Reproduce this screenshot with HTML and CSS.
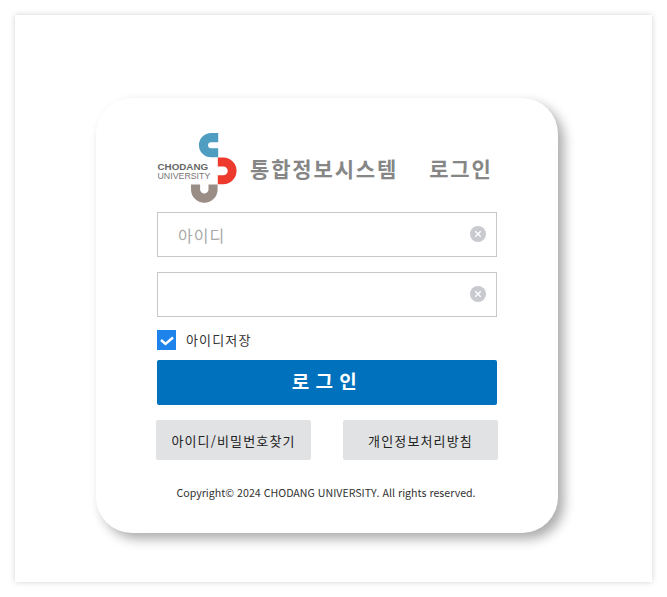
FILE: index.html
```html
<!DOCTYPE html>
<html lang="ko">
<head>
<meta charset="utf-8">
<title>통합정보시스템 로그인</title>
<link rel="stylesheet" href="styles.css">
</head>
<body>
<main class="sheet">
  <section class="card">
    <header class="brand">
      <svg class="logo" width="82" height="72" viewBox="155 132 82 72" aria-label="Chodang University">
        <path d="M217.200 137.600H210.100A7.600 7.600 0 0 0 210.100 152.800H217.200" fill="none" stroke="#4f9dc0" stroke-width="9.100"/>
        <path d="M216.800 161.950H222.250A8.900 8.900 0 0 1 222.250 179.750H216.800" fill="none" stroke="#ee3a2c" stroke-width="8.850"/>
        <path d="M194.550 184.500V189.400A8.750 8.750 0 0 0 212.050 189.400V184.500" fill="none" stroke="#9a8d86" stroke-width="9.100"/>
        <text class="logo-bold" x="156.500" y="169.800">CHODANG</text>
        <text class="logo-thin" x="156.500" y="178.900">UNIVERSITY</text>
      </svg>
      <h1 class="title"><span>통합정보시스템</span><span>로그인</span></h1>
    </header>
    <form class="form">
      <label class="field">
        <input class="input" type="text" placeholder="아이디">
        <span class="clear"><svg width="16" height="16" viewBox="0 0 16 16"><circle cx="8" cy="8" r="8" fill="#c9cad0"/><path d="M5.300 5.300L10.700 10.700M10.700 5.300L5.300 10.700" stroke="#fff" stroke-width="1.300"/></svg></span>
      </label>
      <label class="field">
        <input class="input" type="password">
        <span class="clear"><svg width="16" height="16" viewBox="0 0 16 16"><circle cx="8" cy="8" r="8" fill="#c9cad0"/><path d="M5.300 5.300L10.700 10.700M10.700 5.300L5.300 10.700" stroke="#fff" stroke-width="1.300"/></svg></span>
      </label>
      <div class="remember">
        <span class="check"><svg width="20" height="20" viewBox="0 0 20 20"><path d="M4 10L8.500 14L16 7.500" fill="none" stroke="#fff" stroke-width="2.400"/></svg></span>
        <span class="remember-text">아이디저장</span>
      </div>
      <button class="submit" type="button">로 그 인</button>
      <div class="links">
        <a class="link">아이디/비밀번호찾기</a>
        <a class="link">개인정보처리방침</a>
      </div>
    </form>
    <p class="copy">Copyright© 2024 CHODANG UNIVERSITY. All rights reserved.</p>
  </section>
</main>
</body>
</html>
```
FILE: styles.css
```css
* { box-sizing: border-box; }
html, body { margin: 0; height: 100%; background: #fff; }
body {
  padding: 15px;
  font-family: "Noto Sans CJK KR", "Noto Sans", sans-serif;
  color: #222;
}
.sheet {
  width: 637px;
  height: 567px;
  background: #fff;
  box-shadow: 0 0 6px rgba(0, 0, 0, .18);
  padding: 83px 0 0 81px;
}
.card {
  width: 462px;
  height: 435px;
  background: #fff;
  border-radius: 36px;
  box-shadow: 6px 6px 12px rgba(0, 0, 0, .33);
  padding: 34px 60px 0 60px;
}
.brand { display: flex; align-items: flex-start; height: 80px; }
.logo { display: block; flex: none; }
.logo-bold { font: 700 9.800px "Liberation Sans", sans-serif; fill: #666; }
.logo-thin { font: 400 8.800px "Liberation Sans", sans-serif; fill: #777; }
.title {
  margin: 21px 0 0 12px;
  display: flex;
  gap: 31px;
  font-size: 21px;
  letter-spacing: 1.850px;
  line-height: 30px;
  font-weight: 700;
  color: #868686;
  white-space: nowrap;
}
.form { display: flex; flex-direction: column; padding-left: 1px; }
.field { position: relative; display: block; height: 45px; margin-bottom: 15px; width: 340px; }
.input {
  width: 100%;
  height: 100%;
  border: 1px solid #c6c9cc;
  padding: 0 40px 0 20px;
  font: 400 16px "Noto Sans CJK KR", sans-serif;
  letter-spacing: 1px;
  color: #222;
  background: #fff;
  outline: none;
  border-radius: 0;
}
.input::placeholder { color: #a9a9a9; opacity: 1; }
.clear { position: absolute; right: 11px; top: 14px; width: 16px; height: 16px; }
.clear svg { display: block; }
.remember {
  display: flex;
  align-items: center;
  gap: 10px;
  height: 20px;
  margin: -2px 0 10px;
  font-size: 13px;
  letter-spacing: 1.150px;
  color: #333;
}
.remember-text { position: relative; top: -1px; }
.check { width: 19px; height: 20px; background: #1e84ec; display: block; }
.check svg { display: block; }
.submit {
  width: 340px;
  height: 45px;
  border: 0;
  border-radius: 2px;
  background: #0071bc;
  color: #fff;
  font: 700 19px "Noto Sans CJK KR", sans-serif;
  letter-spacing: .5px;
  padding: 0 5px 5px 0;
}
.links { display: flex; justify-content: space-between; width: 342px; margin: 15px 0 0 -1px; }
.link {
  width: 155px;
  height: 40px;
  background: #e1e2e4;
  border-radius: 2px;
  display: flex;
  align-items: center;
  justify-content: center;
  font-size: 13px;
  letter-spacing: 1.150px;
  color: #222;
}
.copy {
  margin: 24px 0 0 0;
  text-align: center;
  width: 340px;
  font-size: 10.650px;
  line-height: 18px;
  color: #333;
  white-space: nowrap;
}
```
